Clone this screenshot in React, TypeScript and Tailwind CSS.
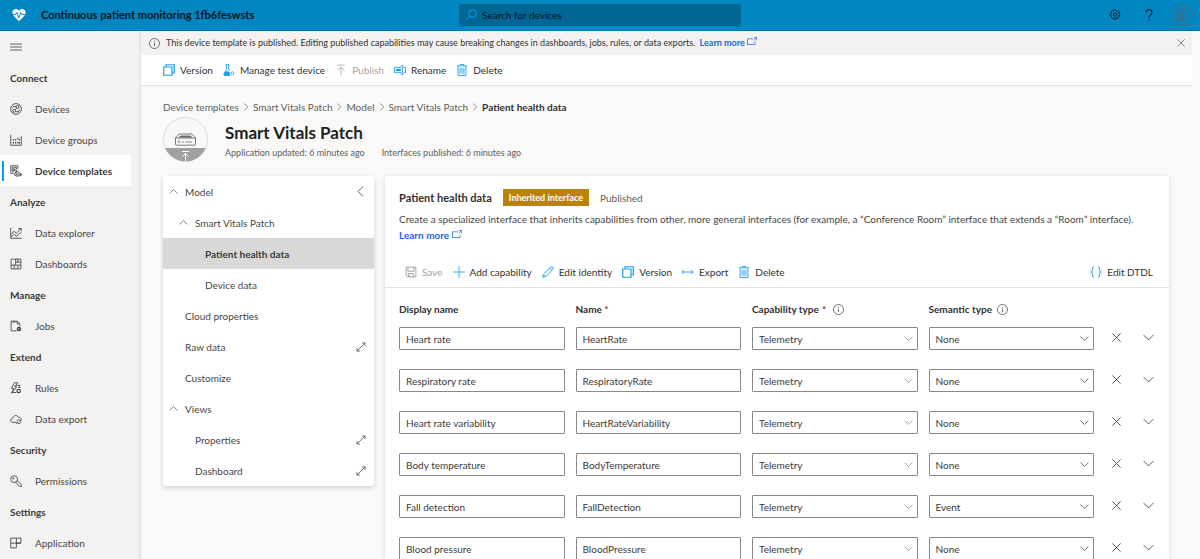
import type { ReactNode } from "react";

type IconProps = { className?: string; children: ReactNode; sw?: number };

function Icon({ className = "size-3", children, sw = 1.1 }: IconProps) {
  return (
    <svg
      viewBox="0 0 16 16"
      fill="none"
      stroke="currentColor"
      strokeWidth={sw}
      className={`shrink-0 ${className}`}
      aria-hidden="true"
    >
      {children}
    </svg>
  );
}

const navIcons: Record<string, ReactNode> = {
  Devices: (
    <>
      <circle cx="8" cy="8" r="7.2" />
      <circle cx="10" cy="5.4" r="2" />
      <circle cx="5.6" cy="10.4" r="2" />
      <path d="M3 6.500c1.500-2 3-2.500 5-1M8 11.500c2 1 4 0 5-2.500M7 9l2-2M9.500 12.500l2.500-2" />
    </>
  ),
  "Device groups": (
    <>
      <path d="M1 1v14h14V3" />
      <path
        d="M4.500 12.500v-2M7.500 12.500v-2M10.500 12.500v-2M4.500 8.500v-2M7.500 8.500v-2M10.500 7V5M12.500 12.500v-2M12.500 8.500v-2"
        strokeWidth="1.6"
      />
    </>
  ),
  "Device templates": (
    <>
      <path d="M10.500 5.500V1H1v10h4M3 3h5.500v3M3 3v5.500h2" />
      <path d="M5 7.500c2-3 4 0 3 2s2 3 3.500 1.500M6.500 11l3-4" />
      <path d="M6 11.500l4-3 5 3.500v2L9 15l-3-2zM7.500 13l4 .5L15 12" />
      <circle cx="5.500" cy="6" r="1.200" />
    </>
  ),
  "Data explorer": (
    <>
      <path d="M1 1v14h14.500" />
      <path d="M1.500 10l4-4.500 3 3 6-6.500M11 2h4v3.500M1.500 13.500l4-4 3 3 6.500-5.500" />
    </>
  ),
  Dashboards: (
    <path d="M1.500 1.500h13v13h-13zM7.500 1.500v8M1.500 9.500h13M10.500 9.500v5M5.500 14.500v-5M10.500 1.500v4M7.500 5.500h7" />
  ),
  Jobs: (
    <>
      <path d="M9 14.500H1.500v-13h8l3.500 3.500v3.500M9.500 1.500V5H13M4 1.500V4M6.500 1.500V4" />
      <circle cx="12" cy="12" r="2" strokeWidth="1.800" />
    </>
  ),
  Rules: (
    <>
      <path d="M6 1L2 8.500h3L2 15l7-8.500H6L10.500 1zM8.500 4.500h5l-2 3h2.500" />
      <circle cx="11.500" cy="12" r="2.300" strokeWidth="1.500" />
      <path d="M3 14h5" />
    </>
  ),
  "Data export": (
    <>
      <path d="M8 12.500H4C0 12.500-.2 7.500 3.500 7.200 4 3 9.500 2 11 5.500c2.500 0 4 1.500 4 3" />
      <path d="M9 10.500c1-2 4-2 5 0M14.500 8.500v2.300h-2.200M14.500 12.500c-1 2-4 2-5 0M9 14.500v-2.200h2.200" />
    </>
  ),
  Permissions: (
    <>
      <circle cx="5.500" cy="5.500" r="4.500" />
      <path d="M9.500 7.500l6 5.500v2.200h-2.800L7.700 9.700" />
      <circle cx="4.500" cy="4.500" r=".8" />
    </>
  ),
  Application: <path d="M1 1.500h13.500v6.700H1zM1 8.200v6.300h7.500V1.500M8.500 8.200h6" />,
};

const sections = [
  { title: "Connect", items: ["Devices", "Device groups", "Device templates"] },
  { title: "Analyze", items: ["Data explorer", "Dashboards"] },
  { title: "Manage", items: ["Jobs"] },
  { title: "Extend", items: ["Rules", "Data export"] },
  { title: "Security", items: ["Permissions"] },
  { title: "Settings", items: ["Application"] },
];

const versionIcon = (
  <Icon className="size-3 text-[#1a9ef0]" sw={1.6}>
    <path d="M1 4h11v11H1zM4 4V1h11v11h-3" />
  </Icon>
);
const flaskIcon = (
  <Icon className="size-3 text-[#1a9ef0]" sw={1.2}>
    <path d="M3.500 1h5M4.500 1v6L1.200 13.500c-.3.900.2 1.500 1 1.500H9M7.500 1v5.500l1.500 2.500" />
    <path d="M3 10.500h5l1 4.500H1.500z" fill="currentColor" />
    <circle cx="12.500" cy="12.500" r="2" />
  </Icon>
);
const publishIcon = (
  <Icon className="size-3">
    <path d="M3 1.500h10M8 15V4.500M3.500 8.500L8 4l4.500 4.500" />
  </Icon>
);
const renameIcon = (
  <Icon className="size-3 text-[#1a9ef0]" sw={1.2}>
    <path d="M9.500 4.500H.6v7h8.900M12.500 4.500h2.900v7h-2.900M11 2.500v11M9 2c1 0 2 .2 2 1 0-.8 1-1 2-1M9 14c1 0 2-.2 2-1 0 .8 1 1 2 1" />
    <path d="M2.500 8h6.500" strokeWidth="3" />
  </Icon>
);
const deleteIcon = (
  <Icon className="size-3 text-[#1a9ef0]" sw={1.2}>
    <path d="M1.500 2.500h13M5.500 2.500V.6h5v1.900M2.800 2.500v12.900h10.400V2.500M5.500 5v8M8 5v8M10.500 5v8" />
  </Icon>
);
const saveIcon = (
  <Icon className="size-3" sw={1.3}>
    <path d="M1.500 1.500h13v13H3L1.500 13zM4 1.500v5.500h8V1.500M4.500 14.500V10h7v4.500M6.500 12v2" />
  </Icon>
);
const addIcon = (
  <Icon className="size-3 text-[#1a9ef0]">
    <path d="M8 0v16M0 8h16" />
  </Icon>
);
const editIcon = (
  <Icon className="size-3 text-[#1a9ef0]" sw={1.2}>
    <path d="M.8 15.200l1-4L12 1c1.500-1 4 1.500 3 3L4.800 14.200zM1.800 11.200l3 3M10.500 2.500l3 3" />
  </Icon>
);
const exportIcon = (
  <Icon className="size-3 text-[#1a9ef0]" sw={1.2}>
    <path d="M1 5v6M1 8h14M12 5l3 3-3 3" />
  </Icon>
);
const bracesIcon = (
  <Icon className="size-3 text-[#1a9ef0]" sw={1.3}>
    <path d="M5.500 1C3.500 1 3.500 2 3.500 4s0 3.500-2.500 4c2.500.5 2.500 2 2.500 4s0 3 2 3M10.500 1c2 0 2 1 2 3s0 3.500 2.500 4c-2.500.5-2.500 2-2.500 4s0 3-2 3" />
  </Icon>
);
const externalIcon = (
  <Icon className="inline-block size-2.5 align-baseline" sw={1.2}>
    <path d="M9.500 4.500H.8v9.200h12V9M11 2.500h4.500V7M15.500 2.500L11 7" />
  </Icon>
);

function Info() {
  return (
    <Icon className="size-[11px] text-[#555]" sw={1.2}>
      <circle cx="8" cy="8" r="7.300" />
      <path d="M8 7v5M8 4v1.500" />
    </Icon>
  );
}

function Chevron({ className = "size-2.5" }: { className?: string }) {
  return (
    <Icon className={className} sw={1.3}>
      <path d="M1 4.500l7 7 7-7" />
    </Icon>
  );
}

type Command = { label: string; icon: ReactNode; disabled?: boolean };

const pageCommands: Command[] = [
  { label: "Version", icon: versionIcon },
  { label: "Manage test device", icon: flaskIcon },
  { label: "Publish", icon: publishIcon, disabled: true },
  { label: "Rename", icon: renameIcon },
  { label: "Delete", icon: deleteIcon },
];

const interfaceCommands: Command[] = [
  { label: "Save", icon: saveIcon, disabled: true },
  { label: "Add capability", icon: addIcon },
  { label: "Edit identity", icon: editIcon },
  { label: "Version", icon: versionIcon },
  { label: "Export", icon: exportIcon },
  { label: "Delete", icon: deleteIcon },
];

function CommandButton({ label, icon, disabled }: Command) {
  return (
    <button
      type="button"
      disabled={disabled}
      className="flex items-center gap-[5px] whitespace-nowrap text-[#323130] disabled:text-[#a6a4a2]"
    >
      {icon}
      {label}
    </button>
  );
}

type TreeItem = {
  label: string;
  pad: string;
  open?: boolean;
  expand?: boolean;
  current?: boolean;
};

const tree: TreeItem[] = [
  { label: "Model", pad: "pl-[6px]", open: true },
  { label: "Smart Vitals Patch", pad: "pl-[16px]", open: true },
  { label: "Patient health data", pad: "pl-[26px]", current: true },
  { label: "Device data", pad: "pl-[26px]" },
  { label: "Cloud properties", pad: "pl-[6px]" },
  { label: "Raw data", pad: "pl-[6px]", expand: true },
  { label: "Customize", pad: "pl-[6px]" },
  { label: "Views", pad: "pl-[6px]", open: true },
  { label: "Properties", pad: "pl-[16px]", expand: true },
  { label: "Dashboard", pad: "pl-[16px]", expand: true },
];

const rows = [
  ["Heart rate", "HeartRate", "None"],
  ["Respiratory rate", "RespiratoryRate", "None"],
  ["Heart rate variability", "HeartRateVariability", "None"],
  ["Body temperature", "BodyTemperature", "None"],
  ["Fall detection", "FallDetection", "Event"],
  ["Blood pressure", "BloodPressure", "None"],
];

const crumbs = ["Device templates", "Smart Vitals Patch", "Model", "Smart Vitals Patch"];

const field =
  "block h-[23px] w-full appearance-none rounded-[1px] border border-[#8a8886] bg-white px-[6px] text-[#3b3a39] outline-none";

function Picker({ label, value, options, soft }: { label: string; value: string; options: string[]; soft?: boolean }) {
  return (
    <div className="relative">
      <select aria-label={label} defaultValue={value} className={field}>
        {options.map((o) => (
          <option key={o}>{o}</option>
        ))}
      </select>
      <span
        className={`pointer-events-none absolute inset-y-0 right-[5px] flex items-center ${soft ? "text-[#868482]" : "text-[#484644]"}`}
      >
        <Chevron className="size-[9px]" />
      </span>
    </div>
  );
}

export default function App() {
  return (
    <div className="flex h-screen flex-col overflow-hidden bg-[#faf9f8] font-['Lato','Open_Sans',sans-serif] text-[10px] leading-4 text-[#484644]">
      <header className="grid h-[31px] shrink-0 grid-cols-[1fr_282px_1fr] items-center border-b border-[#0078ad] bg-[#0086c0] text-[#04141d]">
        <div className="flex items-center gap-[15px] pl-3">
          <svg viewBox="0 0 16 16" className="size-3.5 shrink-0" aria-hidden="true">
            <path
              d="M8 15L1.500 8.500C-.5 6 .3 1.500 4 1.200 6 1 7.300 2.200 8 3.300 8.700 2.200 10 1 12 1.200c3.700.3 4.500 4.800 2.500 7.300z"
              fill="#fff"
            />
            <path d="M0 7.500h4L5.500 5l2.200 6.500L10 5l1.200 2.500H16" fill="none" stroke="#0086c0" strokeWidth="1.100" />
          </svg>
          <span className="text-[11px] font-bold whitespace-nowrap">Continuous patient monitoring 1fb6feswsts</span>
        </div>
        <label className="flex h-[22px] items-center gap-[5px] rounded-[2px] bg-[#006795] pl-1.5">
          <Icon className="size-3 text-[#00a2f2]" sw={1.3}>
            <circle cx="10" cy="6" r="5" />
            <path d="M6.500 9.500L.8 15.200" />
          </Icon>
          <input
            aria-label="Search for devices"
            placeholder="Search for devices"
            className="min-w-0 flex-1 bg-transparent outline-none placeholder:text-[#04141d]"
          />
        </label>
        <div className="flex items-center justify-end pr-[7px]">
          <button type="button" aria-label="Settings" className="mr-[22px]">
            <Icon className="size-3" sw={1.1}>
              <path d="M6.700 1h2.600l.5 1.900 1.700-1 1.800 1.800-1 1.700 2 .6v2.600l-2 .6 1 1.700-1.800 1.800-1.700-1-.5 2H6.700l-.5-2-1.700 1-1.800-1.800 1-1.700-2-.6V6l2-.6-1-1.700 1.800-1.800 1.700 1z" />
              <circle cx="8" cy="7.500" r="2.200" />
            </Icon>
          </button>
          <button type="button" aria-label="Help" className="mr-4">
            <Icon className="size-3" sw={1.4}>
              <path d="M4 5C4 2 5.500 1 8 1s4 1.300 4 3.500C12 7.500 8 8 8 11.500M8 13.500v2" />
            </Icon>
          </button>
          <button
            type="button"
            aria-label="Account"
            className="flex size-[22px] shrink-0 items-center justify-center rounded-full border border-[#4f6f80] text-[#4f6878]"
          >
            <Icon className="size-3" sw={1.3}>
              <path d="M3 2.500h10v12.500H3zM5 0v4M11 0v4M5 13c0-4 6-4 6 0z" />
              <circle cx="8" cy="7.500" r="1.800" />
            </Icon>
          </button>
        </div>
      </header>

      <div className="flex min-h-0 flex-1">
        <nav className="flex w-[141px] shrink-0 flex-col border-r-2 border-[#e6e5e4] bg-[#f3f2f1]">
          <button
            type="button"
            aria-label="Toggle navigation"
            className="flex h-[31px] shrink-0 items-center pl-2.5 text-[#605e5c]"
          >
            <Icon className="size-3" sw={1.3}>
              <path d="M0 4h16M0 8h16M0 12h16" />
            </Icon>
          </button>
          {sections.map((s) => (
            <section key={s.title}>
              <h2 className="flex h-[31px] items-center pl-2.5 font-bold text-[#3b3a39]">{s.title}</h2>
              {s.items.map((item) => {
                const current = item === "Device templates";
                return (
                  <a
                    key={item}
                    href="#"
                    aria-current={current ? "page" : undefined}
                    className={`mr-2 flex h-[31px] items-center ${current ? "bg-white font-bold text-[#3b3a39]" : ""}`}
                  >
                    <span className={`ml-0.5 h-5 w-0.5 ${current ? "bg-[#00a2ff]" : ""}`} />
                    <Icon className="mr-[13px] ml-1.5 size-3 text-[#3b3a39]">{navIcons[item]}</Icon>
                    {item}
                  </a>
                );
              })}
            </section>
          ))}
        </nav>

        <main className="min-w-0 flex-1 overflow-hidden">
          <div className="mr-2 border-b border-[#e1dfdd] bg-white">
            <div className="flex h-6 items-center gap-1.5 bg-[#f3f2f1] pr-1.5 pl-2">
              <Info />
              <p className="flex-1 text-[9px] text-[#323130]">
                This device template is published. Editing published capabilities may cause breaking changes in
                dashboards, jobs, rules, or data exports.{" "}
                <a href="#" className="ml-0.5 font-bold text-[#2266e3]">
                  Learn more {externalIcon}
                </a>
              </p>
              <button type="button" aria-label="Dismiss" className="text-[#605e5c]">
                <Icon className="size-2.5">
                  <path d="M2 2l12 12M14 2L2 14" />
                </Icon>
              </button>
            </div>
            <div className="flex h-[30px] items-center gap-2.5 pl-[22px]">
              {pageCommands.map((c) => (
                <CommandButton key={c.label} {...c} />
              ))}
            </div>
          </div>

          <div className="pt-[13px] pr-[31px] pl-[22px]">
            <nav aria-label="Breadcrumb" className="flex items-center gap-[3px] text-[#605e5c]">
              {crumbs.map((c, i) => (
                <span key={i} className="flex items-center gap-[3px]">
                  <a href="#">{c}</a>
                  <Chevron className="size-2 -rotate-90" />
                </span>
              ))}
              <span className="font-bold text-[#323130]">Patient health data</span>
            </nav>

            <div className="mt-0.5 flex items-center gap-[17px]">
              <svg viewBox="0 0 45 45" className="size-[45px] shrink-0" fill="none" aria-hidden="true">
                <circle cx="22.500" cy="22.500" r="22" fill="#f8f8f8" stroke="#dcdcdc" />
                <path d="M2.300 31h40.400a22 22 0 0 1-40.400 0z" fill="#a0a0a0" />
                <path
                  d="M12.500 21l3.500-4h13l3.500 4M12.500 21h20v6c0 .8-.4 1.200-1.200 1.200H13.700c-.8 0-1.200-.4-1.200-1.200zM16 21l1.500-2h10l1.500 2"
                  stroke="#777"
                />
                <path d="M17.500 19h10l1.500 1.500H16z" fill="#666" />
                <circle cx="16" cy="24.700" r="1" stroke="#888" strokeWidth=".8" />
                <path d="M19 25h2M22 25h7" stroke="#888" />
                <path d="M19 34.500h7M22.500 44v-7.500M19.500 39.500l3-3 3 3" stroke="#fff" />
              </svg>
              <div className="pt-0.5">
                <h1 className="text-[17px] leading-6 font-bold text-[#201f1e]">Smart Vitals Patch</h1>
                <p className="flex gap-[17px] text-[9px] text-[#605e5c]">
                  <span>Application updated: 6 minutes ago</span>
                  <span>Interfaces published: 6 minutes ago</span>
                </p>
              </div>
            </div>

            <div className="mt-[14px] flex items-start gap-[11px]">
              <aside className="w-[211px] shrink-0 rounded-[3px] bg-white shadow-[0_2px_5px_rgba(0,0,0,0.16)]">
                <ul>
                  {tree.map((t, i) => (
                    <li
                      key={t.label}
                      className={`flex h-[31px] items-center pr-2 ${t.pad} ${t.current ? "bg-[#d8d8d8] font-bold text-[#3b3a39]" : ""}`}
                    >
                      <span className="flex w-4 shrink-0 text-[#605e5c]">
                        {t.open && <Chevron className="size-[9px] rotate-180" />}
                      </span>
                      <a href="#" className="flex-1">
                        {t.label}
                      </a>
                      {i === 0 && (
                        <button type="button" aria-label="Collapse panel">
                          <Chevron className="size-[11px] rotate-90" />
                        </button>
                      )}
                      {t.expand && (
                        <button type="button" aria-label={`Expand ${t.label}`}>
                          <Icon className="size-2.5" sw={1.2}>
                            <path d="M1.500 14.500l13-13M9.500 1.500h5v5M1.500 9.500v5h5" />
                          </Icon>
                        </button>
                      )}
                    </li>
                  ))}
                </ul>
              </aside>

              <section className="min-w-0 flex-1 rounded-[3px] bg-white shadow-[0_1px_5px_rgba(0,0,0,0.14)]">
                <div className="px-[14px] pt-[13px]">
                  <div className="flex items-center gap-[11px]">
                    <h2 className="text-[11px] font-bold text-[#323130]">Patient health data</h2>
                    <span className="bg-[#ba8209] px-1.5 text-[9px] leading-[17px] font-bold text-white">
                      Inherited interface
                    </span>
                    <span className="text-[#605e5c]">Published</span>
                  </div>
                  <p className="mt-[5px]">
                    Create a specialized interface that inherits capabilities from other, more general interfaces (for
                    example, a “Conference Room” interface that extends a “Room” interface).
                    <br />
                    <a href="#" className="font-bold text-[#2266e3]">
                      Learn more {externalIcon}
                    </a>
                  </p>
                </div>

                <div className="mt-[13px] flex h-8 items-center gap-2.5 border-b border-[#e1dfdd] pr-4 pl-5">
                  {interfaceCommands.map((c) => (
                    <CommandButton key={c.label} {...c} />
                  ))}
                  <div className="ml-auto">
                    <CommandButton label="Edit DTDL" icon={bracesIcon} />
                  </div>
                </div>

                <div className="pt-[13px] pl-[14px]">
                  <table className="w-full table-fixed">
                    <colgroup>
                      <col />
                      <col />
                      <col />
                      <col />
                      <col className="w-[23px]" />
                      <col className="w-[41px]" />
                    </colgroup>
                    <thead>
                      <tr className="h-[26px] text-left align-top text-[#323130]">
                        <th className="font-bold">Display name</th>
                        <th className="font-bold">
                          Name <span className="text-[#a4262c]">*</span>
                        </th>
                        <th className="font-bold">
                          <span className="flex items-center gap-[3px]">
                            Capability type <span className="mr-1 text-[#a4262c]">*</span>
                            <Info />
                          </span>
                        </th>
                        <th className="font-bold">
                          <span className="flex items-center gap-[5px]">
                            Semantic type <Info />
                          </span>
                        </th>
                        <th aria-label="Remove" />
                        <th aria-label="Details" />
                      </tr>
                    </thead>
                    <tbody>
                      {rows.map(([display, name, semantic]) => (
                        <tr key={name} className="h-[42px] align-top">
                          <td className="pr-[11px]">
                            <input aria-label="Display name" defaultValue={display} className={field} />
                          </td>
                          <td className="pr-[11px]">
                            <input aria-label="Name" defaultValue={name} className={field} />
                          </td>
                          <td className="pr-[11px]">
                            <Picker
                              label="Capability type"
                              value="Telemetry"
                              options={["Telemetry", "Property", "Command"]}
                              soft
                            />
                          </td>
                          <td className="pr-[11px]">
                            <Picker label="Semantic type" value={semantic} options={["None", "Event", "State"]} />
                          </td>
                          <td>
                            <button
                              type="button"
                              aria-label={`Remove ${display}`}
                              className="flex h-5 w-full items-center justify-center"
                            >
                              <Icon className="size-[11px]" sw={1.3}>
                                <path d="M2 2l12 12M14 2L2 14" />
                              </Icon>
                            </button>
                          </td>
                          <td>
                            <button
                              type="button"
                              aria-label={`Show details of ${display}`}
                              className="flex h-5 w-full items-center justify-center"
                            >
                              <Chevron className="size-[11px]" />
                            </button>
                          </td>
                        </tr>
                      ))}
                    </tbody>
                  </table>
                </div>
              </section>
            </div>
          </div>
        </main>
      </div>
    </div>
  );
}
